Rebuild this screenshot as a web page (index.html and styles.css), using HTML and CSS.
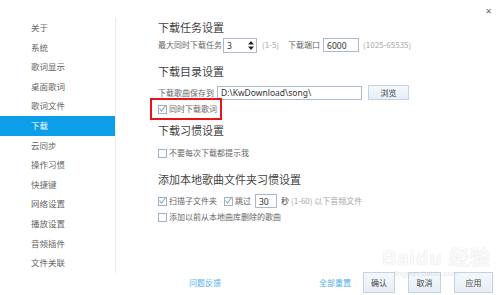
FILE: index.html
```html
<!DOCTYPE html>
<html lang="zh-CN">
<head>
    <meta charset="UTF-8">
    <title>设置 - 下载</title>
    <link rel="stylesheet" href="styles.css">
</head>
<body>
<div class="dialog">
    <ul class="menu">
        <li>关于</li>
        <li>系统</li>
        <li>歌词显示</li>
        <li>桌面歌词</li>
        <li>歌词文件</li>
        <li class="active">下载</li>
        <li>云同步</li>
        <li>操作习惯</li>
        <li>快捷键</li>
        <li>网络设置</li>
        <li>播放设置</li>
        <li>音频插件</li>
        <li>文件关联</li>
    </ul>

    <div class="panel">
        <div class="topbar"><span class="close">&#x2715;</span></div>

        <div class="content">
            <h3 class="title t1">下载任务设置</h3>
            <div class="row r1">
                <span class="label">最大同时下载任务</span>
                <div class="spin">
                    <span class="val">3</span>
                    <span class="arrows">
                        <svg width="6" height="9" viewBox="0 0 6 9"><path d="M3 0 L6 3.5 L0 3.5 Z M0 5.5 L6 5.5 L3 9 Z" fill="#222"/></svg>
                    </span>
                </div>
                <span class="hint h-gap">(1-5)</span>
                <span class="label port-label">下载端口</span>
                <div class="field port">6000</div>
                <span class="hint h-gap2">(1025-65535)</span>
            </div>

            <h3 class="title t2">下载目录设置</h3>
            <div class="row r2">
                <span class="label">下载歌曲保存到</span>
                <div class="field path">D:\KwDownload\song\</div>
                <button class="btn browse">浏览</button>
            </div>
            <div class="mark">
                <span class="check on"><svg width="9" height="9" viewBox="0 0 9 9"><path d="M1.5 4.5 L3.5 7 L8 1" fill="none" stroke="#8ea6bd" stroke-width="1.1"/></svg></span>
                <span class="label">同时下载歌词</span>
            </div>

            <h3 class="title t3">下载习惯设置</h3>
            <div class="row r3">
                <span class="check"></span>
                <span class="label">不要每次下载都提示我</span>
            </div>

            <h3 class="title t4">添加本地歌曲文件夹习惯设置</h3>
            <div class="row r4">
                <span class="check on"><svg width="9" height="9" viewBox="0 0 9 9"><path d="M1.5 4.5 L3.5 7 L8 1" fill="none" stroke="#8ea6bd" stroke-width="1.1"/></svg></span>
                <span class="label">扫描子文件夹</span>
                <span class="check on skip"><svg width="9" height="9" viewBox="0 0 9 9"><path d="M1.5 4.5 L3.5 7 L8 1" fill="none" stroke="#8ea6bd" stroke-width="1.1"/></svg></span>
                <span class="label">跳过</span>
                <div class="field secs">30</div>
                <span class="label dark sec">秒</span>
                <span class="hint sec-hint">(1-60) 以下音频文件</span>
            </div>
            <div class="row r5">
                <span class="check"></span>
                <span class="label">添加以前从本地曲库删除的歌曲</span>
            </div>
        </div>

        <div class="footer">
            <a class="link feedback">问题反馈</a>
            <a class="link reset">全部重置</a>
            <button class="btn ok">确认</button>
            <button class="btn cancel">取消</button>
            <button class="btn apply">应用</button>
        </div>
    </div>

    <div class="watermark">
        <div class="wm-logo">Bai<span class="paw">du</span> 经验</div>
        <div class="wm-url">jingyan.baidu.com</div>
    </div>
</div>
</body>
</html>
```

FILE: styles.css
```css
body {
    margin: 0;
    padding: 0;
    background: #fff;
    font-family: "Noto Sans CJK SC", "Noto Sans", sans-serif;
    color: #555;
}

.dialog {
    position: relative;
    display: flex;
    width: 500px;
    height: 295px;
    overflow: hidden;
    background: #fff;
}

/* left menu */
.menu {
    list-style: none;
    margin: 18px 0 0 0;
    padding: 0;
    width: 115px;
    border-right: 1px solid #ececec;
    align-self: flex-start;
}

.menu li {
    height: 19.6px;
    line-height: 19.6px;
    padding-left: 31px;
    font-size: 8.5px;
    color: #666;
}

.menu li.active {
    background: #0c9ee6;
    color: #fff;
}

/* right panel */
.panel {
    flex: 1;
    display: flex;
    flex-direction: column;
}

.topbar {
    height: 20px;
    display: flex;
    justify-content: flex-end;
    align-items: flex-start;
    padding-right: 8px;
    box-sizing: border-box;
}

.close {
    font-size: 8px;
    line-height: 8px;
    margin-top: 8px;
    color: #666;
    font-family: "DejaVu Sans", sans-serif;
}

.content {
    padding-left: 42px;
    display: flex;
    flex-direction: column;
    align-items: flex-start;
}

.title {
    margin: 0;
    height: 14px;
    line-height: 14px;
    font-size: 11px;
    font-weight: normal;
    color: #444;
}

.t2 { margin-top: 11px; }
.t3 { margin-top: 3px; }
.t4 { margin-top: 13px; }

.row {
    display: flex;
    align-items: center;
}

.r1 { height: 16px; margin-top: 3px; }
.r2 { height: 15px; margin-top: 7px; }
.r3 { height: 12px; margin-top: 10px; }
.r4 { height: 14px; margin-top: 8px; }
.r5 { height: 12px; margin-top: 3px; }

.label {
    font-size: 8px;
    line-height: 12px;
    color: #666;
    white-space: nowrap;
}

.label.dark { color: #444; }

.hint {
    font-size: 8px;
    line-height: 12px;
    color: #a8a8a8;
    white-space: nowrap;
}

.field {
    box-sizing: border-box;
    border: 1px solid #a9b9cb;
    background: #fff;
    font-family: "Noto Sans", sans-serif;
    font-size: 8.5px;
    color: #333;
    display: flex;
    align-items: center;
    padding-left: 3px;
}

.spin {
    box-sizing: border-box;
    margin-left: 1px;
    width: 34px;
    height: 15px;
    border: 1px solid #a9b9cb;
    display: flex;
    align-items: center;
    justify-content: space-between;
    padding: 0 2px 0 3px;
    font-family: "Noto Sans", sans-serif;
    font-size: 8.5px;
    color: #333;
}

.arrows {
    display: flex;
    align-items: center;
}

.h-gap { margin-left: 5px; }
.port-label { margin-left: 9px; }

.port {
    margin-left: 3px;
    width: 36px;
    height: 14px;
}

.h-gap2 { margin-left: 4px; }

.path {
    margin-left: 3px;
    width: 145px;
    height: 14px;
}

.btn {
    box-sizing: border-box;
    border: 1px solid #c3d3e3;
    background: linear-gradient(#f4f8fc, #e6eef7);
    font-family: "Noto Sans CJK SC", sans-serif;
    font-size: 8px;
    color: #444;
    padding: 0;
    cursor: pointer;
}

.browse {
    margin-left: 6px;
    width: 41px;
    height: 15px;
}

/* checkboxes */
.check {
    box-sizing: border-box;
    width: 9px;
    height: 9px;
    border: 1px solid #9fb3c7;
    background: #fff;
    margin-right: 2px;
    display: flex;
    align-items: center;
    justify-content: center;
    flex-shrink: 0;
}

.check svg {
    margin-top: -1px;
    overflow: visible;
}

.mark {
    display: flex;
    align-items: center;
    margin-top: -2px;
    margin-left: -8px;
    height: 22px;
    box-sizing: border-box;
    border: 2px solid #e8131b;
    padding: 0 3px 0 6px;
}

.skip { margin-left: 7px; }

.secs {
    margin-left: 4px;
    width: 22px;
    height: 14px;
}

.sec { margin-left: 4px; }
.sec-hint { margin-left: 2px; }

/* footer */
.footer {
    margin-top: auto;
    margin-bottom: 2px;
    height: 21px;
    display: flex;
    align-items: center;
}

.link {
    font-size: 8px;
    color: #55b0f0;
    cursor: pointer;
}

.feedback { margin-left: 73px; }
.reset { margin-left: 98px; }

.ok {
    margin-left: 12px;
    width: 32px;
    height: 21px;
}

.cancel {
    margin-left: 13px;
    width: 33px;
    height: 21px;
}

.apply {
    margin-left: 13px;
    width: 39px;
    height: 21px;
}

/* image watermark over the dialog */
.watermark {
    position: absolute;
    left: 382px;
    top: 247px;
    pointer-events: none;
}

.wm-logo {
    font-family: "Liberation Sans", "Noto Sans CJK SC", sans-serif;
    font-size: 20px;
    font-weight: bold;
    line-height: 22px;
    color: rgba(255, 255, 255, 0.85);
    text-shadow: 0 0 1px #e2e2e2, 0 0 1px #e2e2e2;
    letter-spacing: 1px;
}

.wm-url {
    margin-left: 12px;
    font-family: "Liberation Sans", sans-serif;
    font-size: 8px;
    line-height: 9px;
    color: rgba(200, 200, 200, 0.5);
}
```
